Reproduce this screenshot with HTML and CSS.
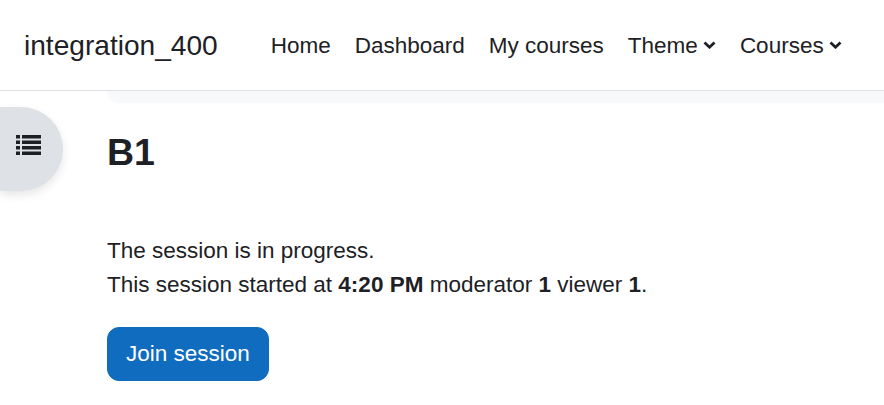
FILE: index.html
```html
<!DOCTYPE html>
<html lang="en">
  <head>
    <meta charset="UTF-8" />
    <meta name="viewport" content="width=device-width, initial-scale=1.0" />
    <title>B1 - integration_400</title>
    <link rel="stylesheet" href="styles.css">
  </head>
  <body>
    <nav class="navbar">
      <a href="#" class="brand">integration_400</a>
      <ul class="nav-links">
        <li><a href="#" class="nav-link">Home</a></li>
        <li><a href="#" class="nav-link">Dashboard</a></li>
        <li><a href="#" class="nav-link">My courses</a></li>
        <li>
          <a href="#" class="nav-link">Theme
            <svg class="caret" width="13" height="8" viewBox="0 0 13 8"><polyline points="1.5,1.5 6.5,6.2 11.5,1.5" /></svg>
          </a>
        </li>
        <li>
          <a href="#" class="nav-link">Courses
            <svg class="caret" width="13" height="8" viewBox="0 0 13 8"><polyline points="1.5,1.5 6.5,6.2 11.5,1.5" /></svg>
          </a>
        </li>
      </ul>
    </nav>

    <div class="page">
      <aside class="drawer-side">
        <button class="drawer-toggle" type="button" aria-label="Open course index">
          <svg width="25" height="20" viewBox="0 0 25 20">
            <rect x="0" y="0" width="4" height="3.5" />
            <rect x="6" y="0" width="19" height="3.5" />
            <rect x="0" y="5.5" width="4" height="3.5" />
            <rect x="6" y="5.5" width="19" height="3.5" />
            <rect x="0" y="11" width="4" height="3.5" />
            <rect x="6" y="11" width="19" height="3.5" />
            <rect x="0" y="16.5" width="4" height="3.5" />
            <rect x="6" y="16.5" width="19" height="3.5" />
          </svg>
        </button>
      </aside>

      <main class="main">
        <div class="secondary-strip"></div>
        <h2 class="page-title">B1</h2>

        <div class="session-info">
          <p>The session is in progress.</p>
          <p>This session started at <strong>4:20 PM</strong> moderator <strong>1</strong> viewer <strong>1</strong>.</p>
        </div>

        <button class="btn-primary" type="button">Join session</button>
      </main>
    </div>
  </body>
</html>
```

FILE: styles.css
```css
* {
  margin: 0;
  padding: 0;
  box-sizing: border-box;
}

body {
  font-family: "Liberation Sans", Arial, sans-serif;
  font-size: 22.5px;
  line-height: 1.5;
  color: #1d2125;
  background: #ffffff;
}

a {
  color: inherit;
  text-decoration: none;
}

/* Navbar */
.navbar {
  height: 91px;
  display: flex;
  align-items: center;
  border-bottom: 1px solid #dee2e6;
  padding-left: 24px;
}

.brand {
  font-size: 28.1px;
  line-height: 1.2;
  margin-right: 41px;
  margin-top: 2px;
}

.nav-links {
  list-style: none;
  display: flex;
  align-items: center;
}

.nav-link {
  display: flex;
  align-items: center;
  padding: 0 12px;
  line-height: 1.2;
}

.caret {
  margin-left: 5px;
  margin-top: -1px;
  fill: none;
  stroke: #1d2125;
  stroke-width: 2.8;
}

/* Page */
.page {
  display: flex;
}

.drawer-side {
  width: 107px;
  flex-shrink: 0;
}

.drawer-toggle {
  margin-top: 16px;
  width: 63px;
  height: 84px;
  border: none;
  border-radius: 0 42px 42px 0;
  background: #dee2e6;
  box-shadow: 0 4px 10px rgba(0, 0, 0, 0.1);
  display: flex;
  align-items: center;
  padding-left: 16px;
  padding-bottom: 9px;
  cursor: pointer;
}

.drawer-toggle svg {
  fill: #1d2125;
}

.main {
  flex: 1;
}

.secondary-strip {
  height: 12px;
  background: #f8f9fa;
  border-bottom-left-radius: 12px;
}

.page-title {
  font-size: 37.5px;
  line-height: 45px;
  font-weight: 700;
  margin-top: 27px;
}

.session-info {
  margin-top: 59px;
}

.session-info p {
  line-height: 34px;
}

.btn-primary {
  margin-top: 25px;
  font-family: inherit;
  font-size: 22.5px;
  line-height: 1.5;
  color: #ffffff;
  background: #0f6cbf;
  border: 1px solid #0f6cbf;
  border-radius: 12px;
  padding: 9px 18px;
  cursor: pointer;
}
```
